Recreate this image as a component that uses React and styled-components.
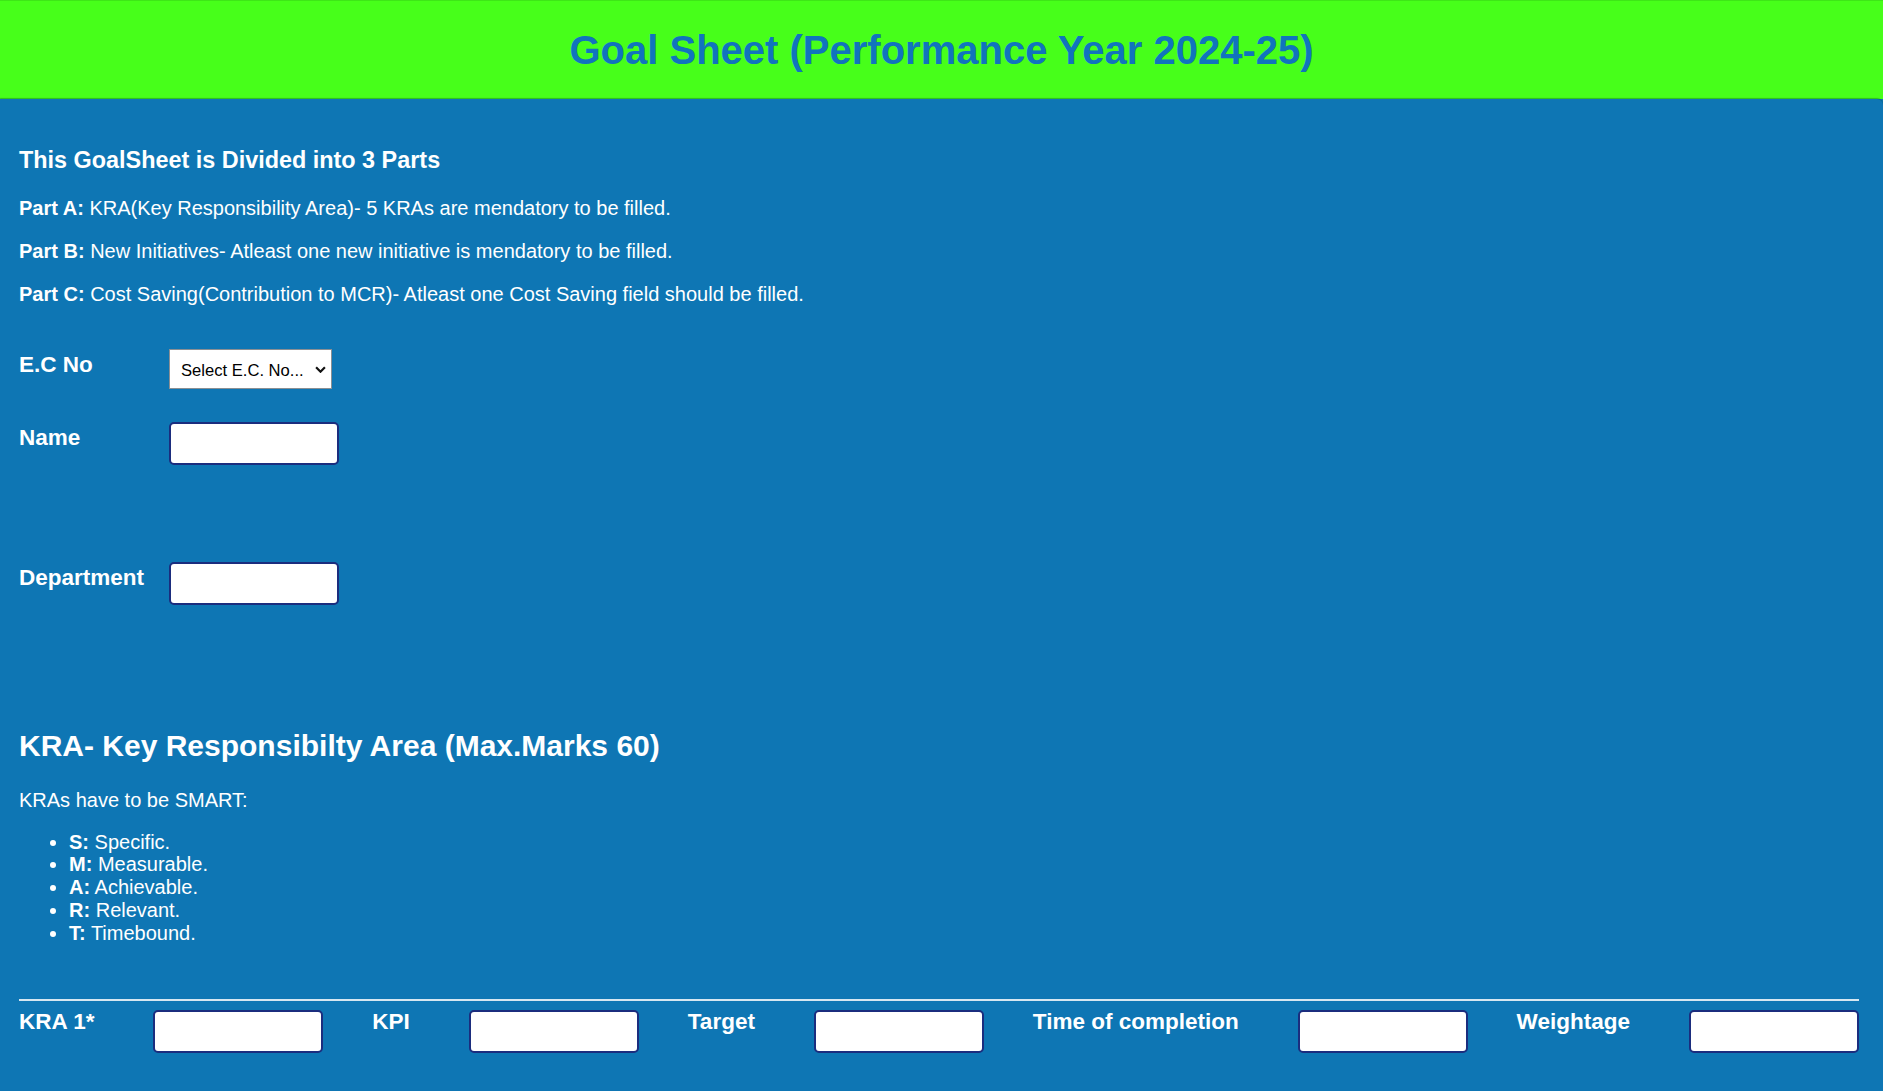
import React from 'react';
import styled, { createGlobalStyle } from 'styled-components';

const GlobalStyle = createGlobalStyle`
	html, body {
		margin: 0;
		padding: 0;
		background: #0e76b4;
		font-family: 'Liberation Sans', Arial, sans-serif;
	}
`;

const smart = [
	{ key: 'S', text: 'Specific.' },
	{ key: 'M', text: 'Measurable.' },
	{ key: 'A', text: 'Achievable.' },
	{ key: 'R', text: 'Relevant.' },
	{ key: 'T', text: 'Timebound.' },
];

const kraFields = ['KRA 1*', 'KPI', 'Target', 'Time of completion', 'Weightage'];

const App = () => {
	return (
		<>
			<GlobalStyle />
			<Header>
				<Title>Goal Sheet (Performance Year 2024-25)</Title>
			</Header>
			<Panel>
				<IntroTitle>This GoalSheet is Divided into 3 Parts</IntroTitle>
				<Parts>
					<PartLine>
						<b>Part A:</b> KRA(Key Responsibility Area)- 5 KRAs are mendatory to be filled.
					</PartLine>
					<PartLine>
						<b>Part B:</b> New Initiatives- Atleast one new initiative is mendatory to be filled.
					</PartLine>
					<PartLine>
						<b>Part C:</b> Cost Saving(Contribution to MCR)- Atleast one Cost Saving field should be filled.
					</PartLine>
				</Parts>

				<Form>
					<FormRow>
						<Label>E.C No</Label>
						<SelectWrap>
							<Select defaultValue="">
								<option value="">Select E.C. No...</option>
							</Select>
							<Chevron viewBox="0 0 10 6">
								<path d="M1 1 L5 5 L9 1" fill="none" stroke="#111" strokeWidth="2" />
							</Chevron>
						</SelectWrap>
					</FormRow>
					<FormRow $top={33}>
						<Label>Name</Label>
						<Input type="text" />
					</FormRow>
					<FormRow $top={97}>
						<Label>Department</Label>
						<Input type="text" />
					</FormRow>
				</Form>

				<KraTitle>KRA- Key Responsibilty Area (Max.Marks 60)</KraTitle>
				<SmartText>KRAs have to be SMART:</SmartText>
				<SmartList>
					{smart.map((s) => (
						<li key={s.key}>
							<b>{s.key}:</b> {s.text}
						</li>
					))}
				</SmartList>

				<Divider />
				<KraRow>
					{kraFields.map((f) => (
						<KraCell key={f}>
							<KraLabel>{f}</KraLabel>
							<Input type="text" />
						</KraCell>
					))}
				</KraRow>
			</Panel>
		</>
	);
};

const Header = styled.header`
	height: 99px;
	box-sizing: border-box;
	border-top: 1px solid #3ee617;
	background: #47ff1a;
	display: flex;
	align-items: center;
	justify-content: center;
`;
const Title = styled.h1`
	margin: 0;
	font-size: 40px;
	line-height: 46px;
	font-weight: bold;
	color: #1174bd;
`;
const Panel = styled.main`
	background: #0e76b4;
	color: #fff;
	border-top-right-radius: 6px;
	box-shadow: 0 -1px 1px rgba(0, 60, 40, 0.35);
	padding: 48px 24px 40px 19px;
`;
const IntroTitle = styled.h3`
	margin: 0 0 23px;
	font-size: 23.4px;
	line-height: 27px;
	font-weight: bold;
`;
const Parts = styled.div`
	display: flex;
	flex-direction: column;
	gap: 20px;
`;
const PartLine = styled.p`
	margin: 0;
	font-size: 20px;
	line-height: 23px;
`;
const Form = styled.div`
	margin-top: 43px;
`;
const FormRow = styled.div`
	display: flex;
	align-items: flex-start;
	margin-top: ${(p) => (p.$top ? `${p.$top}px` : '0')};
`;
const Label = styled.label`
	width: 150px;
	padding-top: 3px;
	font-size: 22.5px;
	line-height: 26px;
	font-weight: bold;
`;
const SelectWrap = styled.div`
	position: relative;
	width: 163px;
	height: 40px;
`;
const Select = styled.select`
	appearance: none;
	width: 100%;
	height: 100%;
	box-sizing: border-box;
	border: 1px solid #8a8f94;
	border-radius: 0;
	background: #fff;
	padding: 2px 0 0 11px;
	font-family: 'Liberation Sans', Arial, sans-serif;
	font-size: 16.6px;
	color: #000;
	outline: none;
`;
const Chevron = styled.svg`
	position: absolute;
	right: 6px;
	top: 17px;
	width: 11px;
	height: 7px;
	pointer-events: none;
`;
const Input = styled.input`
	width: 170px;
	height: 43px;
	box-sizing: border-box;
	border: 2px solid #1b2d7e;
	border-radius: 5px;
	background: #fff;
	outline: none;
	flex-shrink: 0;
`;
const KraTitle = styled.h2`
	margin: 124px 0 25px;
	font-size: 30px;
	line-height: 34.5px;
	font-weight: bold;
`;
const SmartText = styled.p`
	margin: 0 0 19px;
	font-size: 20px;
	line-height: 23px;
`;
const SmartList = styled.ul`
	margin: 0;
	padding-left: 50px;
	font-size: 20px;
	line-height: 22.85px;
`;
const Divider = styled.hr`
	margin: 54px 0 0;
	border: none;
	height: 2px;
	background: #d6e7f1;
`;
const KraRow = styled.div`
	display: flex;
	justify-content: space-between;
	align-items: flex-start;
	margin-top: 9px;
`;
const KraCell = styled.div`
	display: flex;
	align-items: flex-start;
`;
const KraLabel = styled.label`
	margin-right: 59px;
	margin-top: -1px;
	font-size: 22.5px;
	line-height: 26px;
	font-weight: bold;
`;

export default App;
